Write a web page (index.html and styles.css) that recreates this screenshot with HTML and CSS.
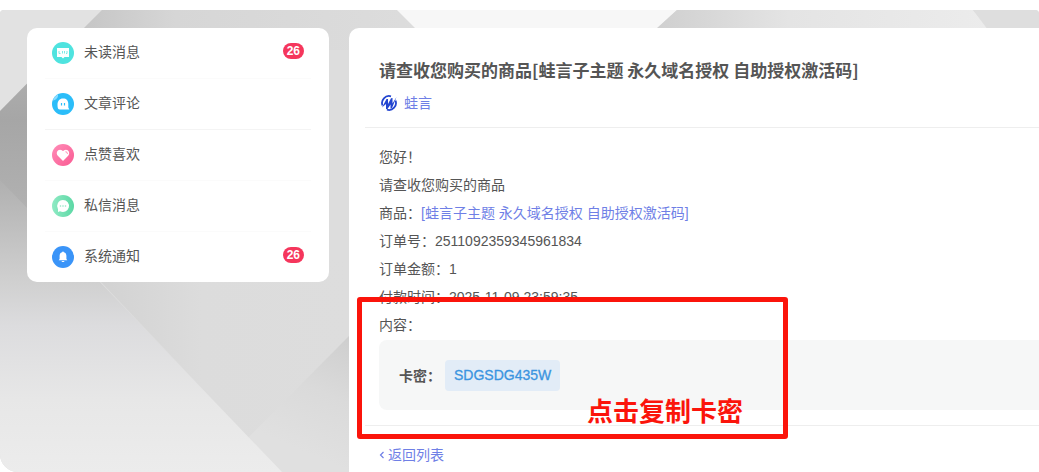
FILE: index.html
```html
<!DOCTYPE html>
<html lang="zh-CN">
<head>
    <meta charset="UTF-8">
    <meta name="viewport" content="width=device-width, initial-scale=1.0">
    <title>系统通知</title>
    <link rel="stylesheet" href="styles.css">
</head>
<body>

<div class="page">
    <svg class="page-bg" viewBox="0 0 1039 462" preserveAspectRatio="none" aria-hidden="true">
        <defs>
            <linearGradient id="bg-dark" x1="0" y1="0" x2="0" y2="1">
                <stop offset="0" stop-color="#b2b2b2"/>
                <stop offset="0.3" stop-color="#a6a6a6"/>
                <stop offset="0.65" stop-color="#b0b0b0"/>
                <stop offset="1" stop-color="#cccccc"/>
            </linearGradient>
            <linearGradient id="bg-low" x1="0" y1="0" x2="0" y2="1">
                <stop offset="0" stop-color="#b0b0b0"/>
                <stop offset="0.35" stop-color="#d0d0d0"/>
                <stop offset="0.5" stop-color="#dcdcde"/>
                <stop offset="0.75" stop-color="#e7e7e7"/>
                <stop offset="1" stop-color="#ececec"/>
            </linearGradient>
            <linearGradient id="bg-top" x1="0" y1="0" x2="1" y2="0">
                <stop offset="0" stop-color="#c2c2c2"/>
                <stop offset="0.3" stop-color="#d6d6d6"/>
                <stop offset="1" stop-color="#dddddd"/>
            </linearGradient>
            <linearGradient id="bg-right" x1="0" y1="0" x2="1" y2="0">
                <stop offset="0" stop-color="#cfcfcf"/>
                <stop offset="0.4" stop-color="#e4e4e4"/>
                <stop offset="1" stop-color="#ececec"/>
            </linearGradient>
            <linearGradient id="bg-fold" x1="0" y1="0" x2="1" y2="0">
                <stop offset="0" stop-color="#d0d0d0"/>
                <stop offset="0.45" stop-color="#dcdcdc"/>
                <stop offset="1" stop-color="#dddddd"/>
            </linearGradient>
            <linearGradient id="bg-corner" gradientUnits="userSpaceOnUse" x1="349" y1="326" x2="300" y2="440">
                <stop offset="0" stop-color="#cecece"/>
                <stop offset="0.5" stop-color="#dadada"/>
                <stop offset="1" stop-color="#e0e0e0"/>
            </linearGradient>
        </defs>
        <rect width="1039" height="462" fill="#dddddd"/>
        <path d="M0 0H102L0 101Z" fill="#e2e2e2"/>
        <path d="M102 0H398L440 40H62Z" fill="url(#bg-top)"/>
        <path d="M0 101L60 40V272H0Z" fill="url(#bg-dark)"/>
        <path d="M80 250H349V462H282Z" fill="url(#bg-fold)"/>
        <path d="M349 326L240 436L266 462H349Z" fill="url(#bg-corner)"/>
        <path d="M0 170L60 232L96 268L282 462H0Z" fill="url(#bg-low)"/>
        <path d="M397 0H677L655 20H417Z" fill="#f7f7f7"/>
        <path d="M677 0H973L990 20H655Z" fill="url(#bg-right)"/>
        <path d="M973 0H1039V20H988Z" fill="#dedede"/>
    </svg>

    <nav class="sidebar">
        <a class="menu-item" href="#">
            <svg class="menu-icon" viewBox="0 0 22 22" aria-hidden="true">
                <circle cx="11" cy="11" r="11" fill="#4fe3df"/>
                <path d="M5 6h12v9h-4.500l-1.500 1.500L9.500 15H5z" fill="#fff"/>
                <path d="M7 9v2.500h1.500M10.500 9v2.500M12.500 9v2.500M15 9v2.500h-1" fill="none" stroke="#7debe6" stroke-width="1"/>
            </svg>
            <span class="menu-text">未读消息</span>
            <span class="badge">26</span>
        </a>
        <a class="menu-item" href="#">
            <svg class="menu-icon" viewBox="0 0 22 22" aria-hidden="true">
                <circle cx="11" cy="11" r="11" fill="#2bbdf9"/>
                <path d="M.8 7.500A11 11 0 0 1 6 1.200c.5 3-1.700 5.800-5.200 6.300z" fill="#8bdcff"/>
                <path d="M11 5.500c3.500 0 5.300 2 5.300 5.500v3.500l1 2H8c-2 0-2.500-1.500-2.500-4.500 0-4 2-6.500 5.500-6.500z" fill="#fff"/>
                <path d="M9.500 10v2.500M12.500 10v2.500" stroke="#2bbdf9" stroke-width="1.200"/>
            </svg>
            <span class="menu-text">文章评论</span>
        </a>
        <a class="menu-item" href="#">
            <svg class="menu-icon" viewBox="0 0 22 22" aria-hidden="true">
                <defs>
                    <linearGradient id="icon-pink" x1="0" y1="0" x2="1" y2="1">
                        <stop offset="0" stop-color="#ff8db8"/>
                        <stop offset="1" stop-color="#fa5a92"/>
                    </linearGradient>
                </defs>
                <circle cx="11" cy="11" r="11" fill="url(#icon-pink)"/>
                <path d="M11 17L5.800 11.800C3 8.500 6.500 4 10 6.300l1 .9 1-.9c3.500-2.300 7 2.200 4.200 5.500z" fill="#fff"/>
                <path d="M13.500 7.800c1.200 0 1.900.8 1.900 2" fill="none" stroke="#ff7cab" stroke-width="1"/>
            </svg>
            <span class="menu-text">点赞喜欢</span>
        </a>
        <a class="menu-item" href="#">
            <svg class="menu-icon" viewBox="0 0 22 22" aria-hidden="true">
                <defs>
                    <linearGradient id="icon-green" x1="0" y1="0" x2="1" y2="0">
                        <stop offset="0" stop-color="#8feac4"/>
                        <stop offset="1" stop-color="#5cd8a5"/>
                    </linearGradient>
                </defs>
                <circle cx="11" cy="11" r="11" fill="url(#icon-green)"/>
                <path d="M11 5a6 6 0 1 1-3 11.200L6 17v-2.800A6 6 0 0 1 11 5z" fill="#fff"/>
                <g fill="#8fe6c3">
                    <circle cx="8.500" cy="11" r=".8"/>
                    <circle cx="11" cy="11" r=".8"/>
                    <circle cx="13.500" cy="11" r=".8"/>
                </g>
            </svg>
            <span class="menu-text">私信消息</span>
        </a>
        <a class="menu-item" href="#">
            <svg class="menu-icon" viewBox="0 0 22 22" aria-hidden="true">
                <circle cx="11" cy="11" r="11" fill="#3a94f8"/>
                <path d="M11 5.500c.6 0 .8.300.9.800 1.800.5 2.500 1.800 2.500 3.700v3l.9 1.300H6.700l.9-1.300v-3c0-1.900.7-3.200 2.500-3.700.1-.5.3-.8.9-.8z" fill="#fff"/>
                <path d="M9.500 15h3c-.3 1.300-2.700 1.300-3 0z" fill="#fff"/>
            </svg>
            <span class="menu-text">系统通知</span>
            <span class="badge">26</span>
        </a>
    </nav>

    <main class="message">
        <header class="message-header">
            <h1>请查收您购买的商品[蛙言子主题 永久域名授权 自助授权激活码]</h1>
            <a class="author" href="#">
                <svg class="author-logo" viewBox="0 0 16 16" aria-hidden="true">
                    <path d="M10 1.300A7 7 0 0 0 1.500 10.500M6 14.700A7 7 0 0 0 14.500 5.500" fill="none" stroke="#2345d0" stroke-width="1.800"/>
                    <path d="M1 12.500L5.500 4 7 4v5L10 3.200l1.500-.2v5.500L15.500 2 11 13l-1.500.5V9.500L6.500 14l-1.500.3V9z" fill="#2345d0"/>
                </svg>
                <span>蛙言</span>
            </a>
        </header>

        <div class="message-body">
            <p>您好！</p>
            <p>请查收您购买的商品</p>
            <p>商品：<a href="#">[蛙言子主题 永久域名授权 自助授权激活码]</a></p>
            <p>订单号：2511092359345961834</p>
            <p>订单金额：1</p>
            <p>付款时间：2025-11-09 23:59:35</p>
            <p>内容：</p>
            <div class="card-key">
                <span class="key-label">卡密：</span>
                <button type="button" class="key-code">SDGSDG435W</button>
            </div>
        </div>

        <footer class="message-footer">
            <a href="#">
                <svg class="back-icon" viewBox="0 0 6 10" aria-hidden="true">
                    <path d="M4.500 2L1.500 5l3 3" fill="none" stroke="currentColor" stroke-width="1.200"/>
                </svg>返回列表</a>
        </footer>

        <div class="highlight">
            <strong>点击复制卡密</strong>
        </div>
    </main>
</div>

</body>
</html>
```

FILE: styles.css
```css
* {
    box-sizing: border-box;
}

body {
    margin: 0;
    padding-top: 10px;
    background-color: #fff;
    color: #555;
    font-family: "Liberation Sans", "Noto Sans CJK SC", sans-serif;
    font-size: 14px;
    overflow-x: hidden;
}

a {
    color: #6f7fe6;
    text-decoration: none;
}

.page {
    position: relative;
    display: flex;
    align-items: flex-start;
    gap: 20px;
    min-height: calc(100vh - 10px);
    padding: 18px 0 0 27px;
    border-radius: 4px 4px 0 18px;
    overflow: hidden;
}

.page-bg {
    position: absolute;
    top: 0;
    left: 0;
    width: 100%;
    height: 100%;
}

/* left menu */
.sidebar {
    position: relative;
    flex: 0 0 302px;
    padding: 0 18px;
    border-radius: 10px;
    background-color: #fff;
}

.menu-item {
    display: flex;
    align-items: center;
    gap: 10px;
    height: 51px;
    padding: 0 7px;
    border-bottom: 1px solid #fbfbfb;
    color: #555;
}

.menu-item:nth-child(2) {
    border-bottom-color: #f4f4f4;
}

.menu-item:last-child {
    height: 50px;
    border-bottom: none;
}

.menu-icon {
    width: 22px;
    height: 22px;
}

.menu-text,
.badge {
    margin-bottom: 4px;
}

.badge {
    margin-left: auto;
    padding: 0 4px;
    border-radius: 8px;
    background-color: #f5365c;
    color: #fff;
    font-size: 12px;
    font-weight: bold;
    line-height: 16px;
}

/* message card */
.message {
    position: relative;
    flex: 1;
    align-self: stretch;
    min-width: 0;
    padding-left: 16px;
    border-radius: 10px 0 0 0;
    background-color: #fff;
}

.message-header {
    padding: 29px 14px 14px;
    border-bottom: 1px solid #eee;
}

.message-header h1 {
    margin: 0 0 10px;
    font-family: "Noto Sans CJK SC", sans-serif;
    font-size: 17px;
    line-height: 26px;
}

.author {
    display: flex;
    align-items: center;
    gap: 7px;
    line-height: 20px;
}

.author-logo {
    width: 16px;
    height: 16px;
    margin-left: 2px;
}

.message-body {
    padding: 15px 0 15px 14px;
    border-bottom: 1px solid #eee;
}

.message-body p {
    margin: 0;
    line-height: 28px;
}

.card-key {
    display: flex;
    align-items: center;
    height: 70px;
    margin-top: 1px;
    padding: 0 20px;
    border-radius: 8px 0 0 8px;
    background-color: #f6f7f7;
}

.key-label {
    font-weight: bold;
}

.key-code {
    height: 31px;
    margin-left: 4px;
    padding: 0 9px;
    border: none;
    border-radius: 4px;
    background-color: #e2ecf7;
    color: #3a94e0;
    font-family: inherit;
    font-size: 14px;
    -webkit-text-stroke: 0.3px #3a94e0;
    cursor: pointer;
}

.message-footer {
    padding: 15px 14px 0;
    line-height: 28px;
}

.back-icon {
    width: 6px;
    height: 10px;
    margin-right: 3px;
}

/* red marker drawn over the card key */
.highlight {
    position: absolute;
    top: 269px;
    left: 8px;
    display: flex;
    align-items: flex-end;
    justify-content: flex-end;
    width: 431px;
    height: 142px;
    padding: 0 40px 2px 0;
    border: 5px solid #fb140b;
    border-radius: 3px;
    color: #fb140b;
    font-size: 26px;
    line-height: 40px;
    pointer-events: none;
}
```
